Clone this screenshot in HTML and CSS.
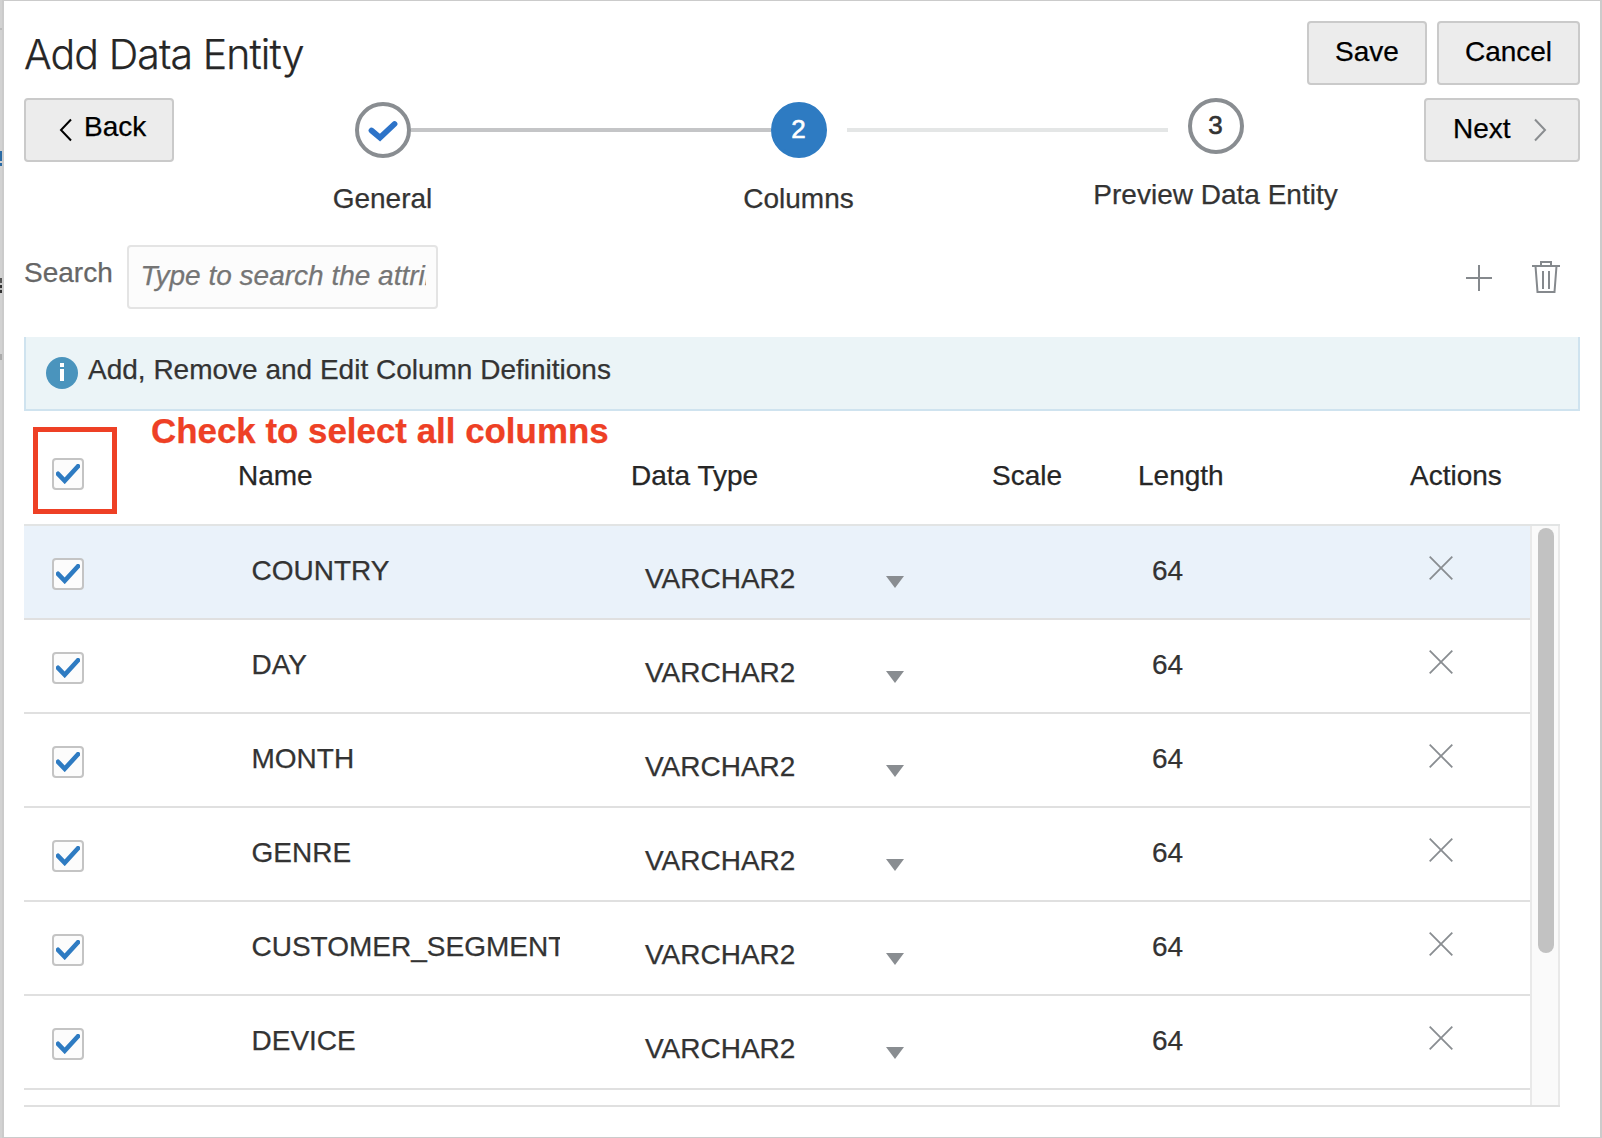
FILE: index.html
```html
<!DOCTYPE html>
<html lang="en">
<head>
<meta charset="utf-8">
<title>Add Data Entity</title>
<link rel="stylesheet" href="styles.css">
</head>
<body>
<svg class="defs" aria-hidden="true">
  <symbol id="check" viewBox="0 0 24 20"><path d="M2 9.800l6.700 7L22 2.200" fill="none" stroke="currentColor" stroke-width="4.600" stroke-linecap="round"/></symbol>
  <symbol id="cross" viewBox="0 0 24 24"><path d="M.7 .7l22.6 22.6M23.3 .7L.7 23.3" fill="none" stroke="currentColor" stroke-width="1.8"/></symbol>
  <symbol id="arrow" viewBox="0 0 18 12"><path d="M0 0h18L9 12z" fill="currentColor"/></symbol>
</svg>
<div class="backdrop">
  <span class="sliver rule"></span><span class="sliver link"></span><span class="sliver text"></span><span class="sliver mark"></span>
</div>
<main class="dialog">
  <header class="titlebar">
    <h1><span class="t">Add Data Entity</span></h1>
    <div class="buttons">
      <button class="btn save"><span class="t">Save</span></button>
      <button class="btn cancel"><span class="t">Cancel</span></button>
    </div>
  </header>
  <nav class="wizard">
    <button class="btn back"><svg width="14" height="24" viewBox="0 0 14 24"><path d="M12 1.5L2 12l10 10.5" fill="none" stroke="#000" stroke-width="2"/></svg><span class="t">Back</span></button>
    <ol class="train">
      <li class="step done"><span class="dot"><svg width="30" height="24" viewBox="0 0 30 24"><path d="M3.500 11.500L12 18.700 26.500 5" fill="none" stroke="#2d73c8" stroke-width="5.800" stroke-linecap="round"/></svg></span><span class="label">General</span></li>
      <li class="link"></li>
      <li class="step current"><span class="dot">2</span><span class="label">Columns</span></li>
      <li class="link next"></li>
      <li class="step todo"><span class="dot">3</span><span class="label">Preview Data Entity</span></li>
    </ol>
    <button class="btn fwd"><span class="t">Next</span><svg width="14" height="24" viewBox="0 0 14 24"><path d="M2 1.500L12 12 2 22.500" fill="none" stroke="#8a8d90" stroke-width="2"/></svg></button>
  </nav>
  <section class="toolbar">
    <label class="search">Search</label>
    <div class="field"><span>Type to search the attributes</span></div>
    <div class="tools">
      <svg width="26" height="26" viewBox="0 0 26 26"><path d="M13 0v26M0 13h26" stroke="#85898d" stroke-width="2"/></svg>
      <svg width="28" height="32" viewBox="0 0 28 32"><path d="M0 5h28M9 5V1h10v4M3.500 5l2 26h17l2-26M11 10v18M17 10v18" fill="none" stroke="#85898d" stroke-width="2"/></svg>
    </div>
  </section>
  <section class="info">
    <svg width="32" height="32" viewBox="0 0 32 32"><circle cx="16" cy="16" r="16" fill="#4a94bd"/><path d="M14 6h4v4h-4zM14 12h4v12h-4z" fill="#fff"/></svg>
    <span>Add, Remove and Edit Column Definitions</span>
  </section>
  <section class="grid">
    <div class="head cols">
      <span class="box"><svg width="24" height="20"><use href="#check"/></svg></span>
      <span>Name</span><span>Data Type</span><span></span><span>Scale</span><span>Length</span><span>Actions</span>
    </div>
    <div class="callout"></div>
    <p class="note">Check to select all columns</p>
    <div class="viewport">
      <div class="rows" id="rows"></div>
      <div class="track"><div class="thumb"></div></div>
    </div>
  </section>
</main>
<script src="rows.js"></script>
</body>
</html>
```
FILE: rows.js
```js
const names = ["COUNTRY", "DAY", "MONTH", "GENRE", "CUSTOMER_SEGMENT", "DEVICE"];
document.getElementById("rows").innerHTML = names.map((name, i) => `
  <div class="row cols${i === 0 ? " selected" : ""}">
    <span class="box"><svg width="24" height="20"><use href="#check"/></svg></span>
    <span class="name">${name}</span>
    <span class="type">VARCHAR2</span>
    <svg class="drop" width="18" height="12"><use href="#arrow"/></svg>
    <span></span>
    <span class="len">64</span>
    <svg class="remove" width="24" height="24"><use href="#cross"/></svg>
  </div>`).join("");
```
FILE: styles.css
```css
* { box-sizing: border-box; }
body {
  margin: 0; width: 1602px; height: 1138px; overflow: hidden; position: relative;
  font: 28px/32px "Liberation Sans", Arial, sans-serif; color: #333; background: #d2d2d2;
  -webkit-text-stroke: 0.25px;
}
.defs { position: absolute; width: 0; height: 0; }
.sliver { position: absolute; left: 0; width: 2px; }
.sliver.rule { top: 28px; height: 2px; background: #bbb; }
.sliver.link { top: 151px; height: 15px; background: linear-gradient(#2a6ba5 10px, #d2d2d2 10px 12px, #2a6ba5 12px); }
.sliver.text { top: 278px; height: 15px; background: linear-gradient(#555 5px, #ccc 5px 7px, #333 7px 10px, #bbb 10px 12px, #333 12px); }
.sliver.mark { top: 354px; height: 6px; background: #aaa; }
.dialog {
  position: relative; margin-left: 2px; width: 1600px; height: 1138px; background: #fff;
  border: 2px solid #cbcbcb; border-top-width: 1px; border-bottom-width: 1px; padding: 20px 20px 0;
}
.titlebar { display: flex; justify-content: space-between; height: 77px; }
h1 { margin: 9px 0 0; font: 300 41px/48px Inter, "Liberation Sans", sans-serif; letter-spacing: -0.9px; color: #262626; }
.buttons { display: flex; gap: 10px; }
.btn {
  height: 64px; border: 2px solid #cacaca; border-radius: 4px; background: #ececec; color: #000;
  font: inherit; padding: 0; display: flex; align-items: center; justify-content: center;
}
.save { width: 120px; padding-bottom: 2px; }
.cancel { width: 143px; padding-bottom: 2px; }
.wizard { display: flex; justify-content: space-between; height: 147px; }
.back { width: 150px; justify-content: flex-start; padding-left: 33px; gap: 11px; }
.back .t { margin-top: -6px; }
.fwd { width: 156px; justify-content: flex-start; padding-left: 27px; gap: 22px; }
.fwd .t { margin-top: -2px; }
.train { list-style: none; margin: 0; padding: 0; width: 889px; display: flex; }
.step { width: 56px; display: flex; flex-direction: column; align-items: center; gap: 25px; margin-top: 4px; }
.step.todo { margin-top: 0; }
.dot {
  width: 56px; height: 56px; flex: none; border: 4px solid #898d91; border-radius: 50%;
  display: flex; align-items: center; justify-content: center; font-size: 26px; padding-bottom: 3px;
  -webkit-text-stroke: 0.6px;
}
.done .dot { padding: 1px 0 0; }
.current .dot { background: #2e7bc2; border-color: #2e7bc2; color: #fff; }
.label { white-space: nowrap; }
.train .link { flex: none; width: 360px; height: 4px; margin-top: 30px; background: #c4c5c7; }
.train .next { width: 321px; margin-left: 20px; margin-right: 20px; background: #e4e6e6; }
.toolbar { display: flex; height: 92px; }
.search { width: 103px; padding-top: 12px; color: #666; }
.field {
  width: 311px; height: 64px; border: 2px solid #e4e4e4; border-radius: 4px; background: #fcfcfc;
  padding: 13px 10px 0 11.5px; font-style: italic; color: #757575;
}
.field span { display: block; overflow: hidden; white-space: nowrap; }
.tools { margin-left: auto; display: flex; align-items: center; gap: 40px; height: 66px; padding-right: 20px; }
.tools svg:last-child { margin-top: -2px; }
.info {
  display: flex; height: 74px; background: #ebf4f7; border: 2px solid #cfe3ef; border-top: 0;
  padding: 20px 20px 0; gap: 10px;
}
.info span { margin-top: -3px; }
.grid { position: relative; width: 1536px; }
.cols { display: grid; grid-template-columns: 214px 393px 240px 121px 146px 272px 1fr; align-items: start; }
.head { height: 115px; padding-top: 47px; border-bottom: 2px solid #e2e4e4; color: #262626; }
.head > span:not(.box) { margin-top: 2px; }
.box {
  width: 32px; height: 32px; margin-left: 28px; border: 2px solid #c4c4c4; border-radius: 4px; background: #fcfcfc;
  display: flex; align-items: center; justify-content: center; color: #2e7bc2;
}
.callout { position: absolute; left: 9px; top: 16px; width: 84px; height: 87px; border: 5px solid #ee4025; }
.note { position: absolute; left: 127px; top: 0; margin: 0; font-weight: bold; font-size: 34.900px; line-height: 40px; color: #ee4025; white-space: nowrap; }
.viewport { display: flex; height: 581px; border-bottom: 2px solid #e0e0e0; overflow: hidden; }
.rows { width: 1506px; }
.row { height: 94px; border-bottom: 2px solid #e0e0e0; padding-top: 32px; }
.row.selected { background: #eaf2fa; }
.name { margin: -3px 0 0 13.5px; width: 308px; overflow: hidden; }
.type { margin: 5px 0 0 14px; }
.drop { margin: 18.500px 0 0 15px; color: #898d91; }
.selected .drop { margin-top: 17.500px; }
.len { margin: -3px 0 0 14px; }
.remove { margin: -2px 0 0 18.500px; color: #898d91; }
.track { width: 30px; border: 2px solid #e9e9e9; border-width: 0 2px; background: #fafafa; padding: 2px 4px 0 6px; }
.thumb { height: 425px; border-radius: 8px; background: #c2c2c2; }
```
